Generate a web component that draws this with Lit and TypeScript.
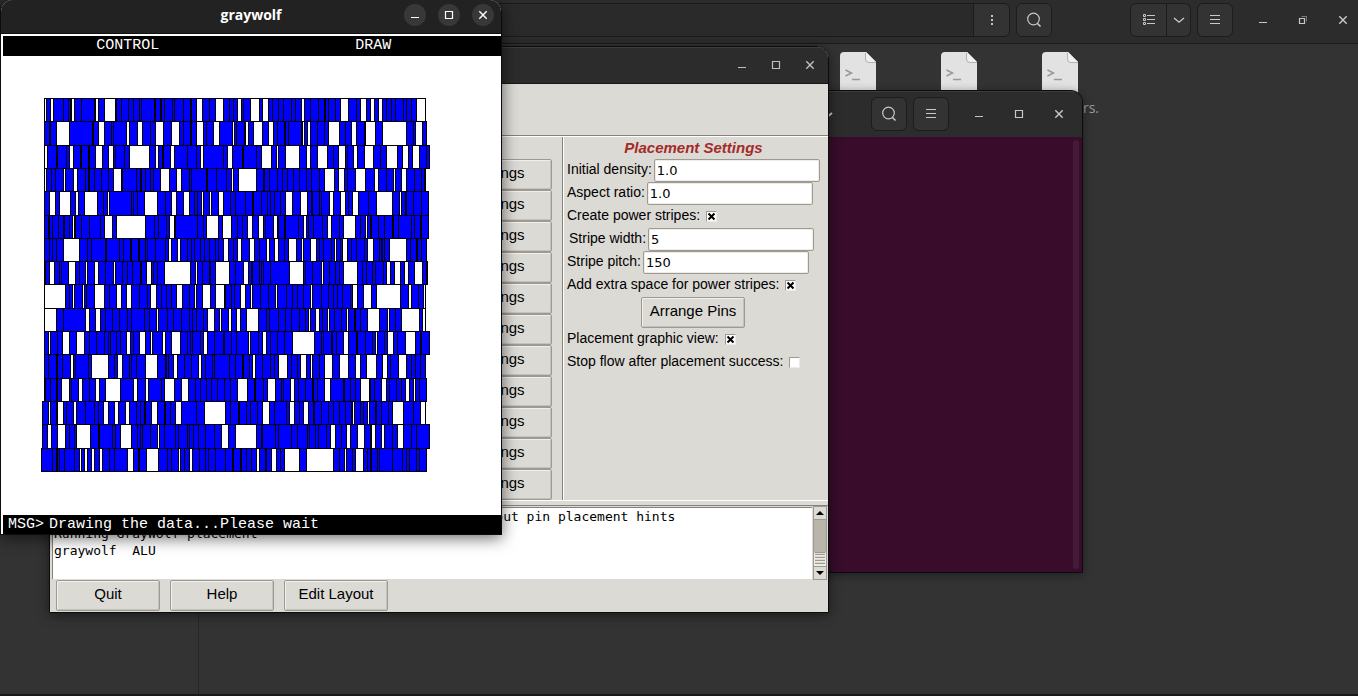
import { LitElement, html, css, svg } from "lit";
import { customElement } from "lit/decorators.js";

/* Cell rows of the placement: each number is the x of a cell's left edge,
   "w" marks an empty slot, and the last number closes the row. */
const ROWS: { y: number; cells: string }[] = [
  { y: 98, cells: "w14 16 w20 23 33 38 40 w41 44 51 64 w65 68 w74 85 86 91 98 103 109 111 124 125 130 131 134 142 144 153 160 161 w166 172 179 w185 193 199 203 w207 211 213 w220 229 w232 238 242 248 253 261 265 w271 274 280 288 294 295 298 305 w310 318 326 w330 336 w340 344 w348 352 356 361 365 373 376 381 w386 395" },
  { y: 121, cells: "14 19 20 w26 39 62 63 w68 74 81 83 w96 99 w107 112 120 w125 133 w141 149 153 160 161 w166 173 176 w183 189 w202 204 206 214 w215 218 w223 232 w238 243 247 254 255 258 271 w272 274 w277 280 287 294 w298 309 315 w321 326 334 w335 345 w352 376 383 w385 392 396" },
  { y: 145, cells: "w14 17 26 27 36 w39 43 50 51 58 59 w65 72 w78 83 85 94 w99 119 w125 128 132 133 w140 144 157 166 w170 173 193 w197 202 212 213 226 w231 241 w246 248 w255 269 w276 280 w287 297 303 w308 315 317 w323 327 w334 343 350 w356 367 w372 378 w382 389 396 399" },
  { y: 168, cells: "w14 16 21 25 w33 35 w43 47 55 58 59 64 71 78 w83 91 92 106 110 111 115 120 123 w130 139 w146 151 159 161 176 177 186 196 w201 203 w208 226 233 234 239 247 252 257 263 269 276 281 289 w294 304 w308 314 317 w325 335 w344 348 356 w363 365 w371 376 384 391 394 395" },
  { y: 191, cells: "14 w19 25 w29 40 w45 48 w54 67 73 w77 79 101 103 107 w114 127 135 w141 146 w153 159 164 167 w171 173 w179 181 w188 193 200 205 215 222 223 231 237 240 244 250 w255 262 w270 277 281 282 289 291 w299 303 w310 315 318 w322 328 338 w346 362 w369 371 375 376 383 391 398" },
  { y: 215, cells: "14 18 19 22 28 33 34 39 w42 44 45 51 59 70 w74 82 w86 115 124 128 136 w139 144 145 167 173 w176 188 w192 201 207 212 w217 222 w228 233 235 w243 247 248 254 255 268 w273 276 278 283 292 w297 301 309 w313 325 330 w335 337 340 341 348 354 362 363 368 381 384 390 391 398" },
  { y: 238, cells: "14 19 22 26 w33 49 57 61 75 76 89 93 100 101 108 109 115 117 125 135 w138 141 w147 150 157 161 164 170 174 179 185 188 w193 198 203 w207 211 w219 224 229 w236 239 w244 248 254 w258 266 w271 273 w280 286 289 293 301 w304 306 310 w312 317 321 326 334 w337 343 349 351 352 354 w359 376 380 386 387 391 396" },
  { y: 261, cells: "14 15 w19 24 29 31 w38 45 49 w55 57 w64 68 75 w83 85 92 97 102 110 111 w116 121 123 127 w134 160 w165 167 172 179 180 w185 199 205 w213 218 221 222 229 231 233 240 w259 273 275 282 w291 293 299 305 309 w313 327 332 336 342 345 353 w356 360 w364 370 w374 378 w384 392 396 397" },
  { y: 284, cells: "w14 35 39 w42 44 w52 54 56 w64 74 79 w86 91 w96 101 109 117 w120 126 131 136 141 w146 152 159 w164 166 w172 180 w185 194 195 201 204 w210 215 w220 222 230 238 w245 247 256 262 267 273 w280 282 291 298 303 307 312 320 w322 327 w333 341 w346 370 w378 381 388 w393 395" },
  { y: 308, cells: "w14 26 33 w55 59 w65 70 75 82 89 97 101 114 119 w126 128 137 143 151 159 162 166 173 w177 184 w189 191 w198 201 w206 210 w216 228 236 239 248 255 261 269 275 w278 280 w285 289 292 w297 299 304 311 w316 318 324 325 330 w337 349 w357 359 365 w371 389 w392 395" },
  { y: 331, cells: "14 w18 20 27 w32 39 w46 54 59 66 74 78 80 86 90 w96 100 103 w109 115 w120 122 w132 135 w141 150 157 160 162 170 w173 177 184 193 194 201 206 w218 220 228 w232 236 240 247 254 w262 284 291 293 301 302 306 w313 318 326 327 335 342 w345 347 354 w357 363 367 w375 385 390 391 399" },
  { y: 354, cells: "14 18 26 27 32 w40 43 45 58 w61 78 84 w87 92 99 101 106 w115 127 135 136 138 w143 147 154 161 w168 171 175 182 184 199 205 212 213 219 w222 225 232 240 244 w248 257 261 267 w270 276 w280 282 289 w294 302 w309 318 w325 330 w336 346 w352 357 360 w368 376 381 385 390 395" },
  { y: 378, cells: "14 15 20 26 27 w31 39 41 w48 52 59 w65 69 w75 90 w103 107 w115 118 131 w134 144 w151 158 165 170 176 181 187 194 200 w207 217 224 225 233 w237 245 251 253 w260 264 268 275 282 283 287 w294 300 313 314 320 325 w330 339 340 344 w351 356 359 366 371 w375 379 w383 385 389 396" },
  { y: 401, cells: "12 w18 20 26 w27 33 36 w43 46 55 64 68 w73 78 w84 88 w95 99 106 110 114 115 w121 127 134 135 140 w145 151 166 w174 195 200 208 209 216 220 227 w232 239 244 256 w259 264 269 w273 278 283 284 291 298 303 309 315 321 w322 324 330 333 w337 339 345 346 351 358 w362 373 383 w390 395" },
  { y: 424, cells: "12 w17 21 w27 35 39 44 w46 60 68 69 82 85 w90 101 107 110 112 120 w127 129 134 145 148 157 159 163 168 175 184 w191 198 w205 226 231 232 245 248 261 267 277 279 285 288 296 w300 305 311 w316 320 w327 334 340 w341 345 w351 354 362 w367 373 381 386 399" },
  { y: 448, cells: "11 22 26 27 29 34 44 w49 51 w54 57 w61 64 w69 72 79 84 w97 103 108 109 w116 128 137 141 w148 150 154 w159 162 169 175 178 185 195 202 203 210 211 216 221 w226 229 235 236 w241 246 250 w254 269 w276 303 309 w314 316 322 w325 333 337 340 341 347 349 362 372 376 379 386 389 396" },
];

const drawPlacement = () => {
  const top = 98;
  const blue: string[] = [];
  const lines: string[] = [];
  ROWS.forEach((row, i) => {
    const y = row.y - top;
    const next = (ROWS[i + 1]?.y ?? 471) - top;
    const cells = row.cells.split(" ").map((c) => ({ empty: c[0] === "w", x: Number(c.replace("w", "")) - 11 }));
    const last = cells[cells.length - 1].x;
    cells.forEach((c, k) => {
      lines.push(`M${c.x} ${y}h1v${next - y + 1}h-1z`);
      if (!c.empty && k < cells.length - 1) blue.push(`M${c.x} ${y}H${cells[k + 1].x}V${next}H${c.x}z`);
    });
    lines.push(`M${cells[0].x} ${y}H${last + 1}v1H${cells[0].x}z`, `M${cells[0].x} ${next}H${last + 1}v1H${cells[0].x}z`);
  });
  return svg`<path d=${blue.join("")} fill="#0000ff"/><path d=${lines.join("")} fill="#000"/>`;
};

const icon = (body: unknown, size = 16) =>
  html`<svg width=${size} height=${size} viewBox="0 0 ${size} ${size}" fill="none" stroke="currentColor" aria-hidden="true">${body}</svg>`;
const minimize = () => icon(svg`<path d="M4 10.5h8"/>`);
const maximize = () => icon(svg`<path d="M4.5 4.5h7v7h-7z" stroke-width="1.2"/>`);
const restore = () => icon(svg`<path d="M4.500 6.500h5v5h-5z" stroke-width="1.2"/><path d="M6.500 4.500h5v5" opacity=".5"/>`);
const close = () => icon(svg`<path d="M4.3 4.3l7.4 7.4M11.7 4.3l-7.4 7.4" stroke-width="1.4"/>`);
const search = () => icon(svg`<circle cx="7.5" cy="7" r="5.8" stroke-width="1.2"/><path d="M11.5 11.5l3 3" stroke-width="1.6"/>`);
const menu = () => icon(svg`<path d="M3 3.5h10M3 7.5h10M3 11.5h10"/>`);
const dots = () => icon(svg`<path d="M7 3h2v2H7zM7 7h2v2H7zM7 11h2v2H7z" fill="currentColor" stroke="none"/>`);
const list = () => icon(svg`<path d="M2.5 2.5h2v2h-2zM2.5 6.5h2v2h-2zM2.5 10.5h2v2h-2zM6 3.5h8M6 7.5h8M6 11.5h8"/>`);
const chevron = () => icon(svg`<path d="M3 6l5 4.2L13 6" stroke-width="1.4"/>`);
const smallChevron = () => icon(svg`<path d="M5 7l3 2.5L11 7" stroke-width="2"/>`);

const base = css`
  :host, *, *::before, *::after { box-sizing: border-box; }
  button, input { font: inherit; color: inherit; margin: 0; padding: 0; border: 0; background: none; }
  button { display: grid; place-items: center; }
  svg { display: block; }
  .win-btn { width: 22px; height: 22px; border-radius: 11px; }
`;

@customElement("file-manager")
export class FileManager extends LitElement {
  static styles = [base, css`
    :host { display: flex; flex-direction: column; height: 100%; background: #333; color: #c8c8c8; border-bottom: 2px solid #1a1a1a; }
    .header { display: flex; align-items: center; justify-content: flex-end; flex: none; height: 44px; padding: 0 4px 4px 0; background: #2c2c2c; border-bottom: 1px solid #1a1a1a; }
    .path { flex: 1; display: flex; justify-content: flex-end; height: 34px; border: 1px solid #1a1a1a; border-radius: 6px; margin-right: 6px; background: #2a2a2a; overflow: hidden; }
    .tool { width: 36px; height: 34px; background: #333; border: 1px solid #1c1c1c; border-radius: 6px; }
    .path .tool { height: 32px; border-width: 0 0 0 1px; border-radius: 0; }
    .gap { flex: 0 1 78px; }
    .view { display: flex; margin-right: 6px; }
    .view .tool:first-child { border-radius: 6px 0 0 6px; width: 37px; }
    .view .tool:last-child { border-radius: 0 6px 6px 0; border-left: 0; width: 24px; }
    .controls { display: flex; gap: 18px; margin-left: 19px; }
    .body { flex: 1; display: grid; grid-template-columns: 199px 1fr; }
    .side { border-right: 1px solid #262626; }
    .files { display: flex; gap: 65px; padding: 8px 0 0 641px; align-items: flex-start; }
    .file { width: 36px; display: flex; flex-direction: column; align-items: flex-end; }
    .caption { margin-right: -21px; font: 14px/20px "Open Sans", "Noto Sans", sans-serif; color: #999; }
  `];
  render() {
    const files = ["", "", "rs."];
    return html`
      <header class="header">
        <div class="path"><button class="tool" aria-label="Path menu">${dots()}</button></div>
        <button class="tool" aria-label="Search">${search()}</button>
        <span class="gap"></span>
        <div class="view">
          <button class="tool" aria-label="List view">${list()}</button>
          <button class="tool" aria-label="View options">${chevron()}</button>
        </div>
        <button class="tool" aria-label="Menu">${menu()}</button>
        <div class="controls">
          <button class="win-btn" aria-label="Minimize">${minimize()}</button>
          <button class="win-btn" aria-label="Restore">${restore()}</button>
          <button class="win-btn" aria-label="Close">${close()}</button>
        </div>
      </header>
      <div class="body">
        <aside class="side"></aside>
        <main class="files">
          ${files.map((name) => html`
            <div class="file">
              <svg width="36" height="46" viewBox="0 0 36 46" aria-hidden="true">
                <path d="M4 0h22l10 10v32q0 4-4 4H4q-4 0-4-4V4q0-4 4-4z" fill="#e2e2e2"/>
                <path d="M26 0l10 10h-7q-3 0-3-3z" fill="#f0f0f0"/>
                <path d="M25.5 1v6q0 3.5 3.5 3.5h7" fill="none" stroke="#b4b0ac"/>
                <path d="M5.5 18l6 3-6 3M12 27.5h8" fill="none" stroke="#999" stroke-width="1.5"/>
              </svg>
              <span class="caption">${name}</span>
            </div>`)}
        </main>
      </div>`;
  }
}

@customElement("terminal-window")
export class TerminalWindow extends LitElement {
  static styles = [base, css`
    :host { display: flex; flex-direction: column; border: 1px solid #0c0c0c; border-radius: 12px 12px 0 0; overflow: hidden; background: #380c2a; color: #c8c8c8; box-shadow: 0 2px 10px rgba(0, 0, 0, .4); }
    .header { display: flex; align-items: center; justify-content: flex-end; gap: 6px; height: 46px; padding: 0 12px 2px 0; background: #2c2c2c; border-top: 1px solid #3c3c3c; }
    .tool { width: 36px; height: 34px; background: #333; border: 1px solid #1c1c1c; border-radius: 6px; }
    .drop { width: 16px; margin-right: 28px; }
    .controls { display: flex; gap: 18px; margin-left: 13px; }
    .screen { flex: 1; display: flex; justify-content: flex-end; padding: 3px; }
    .thumb { width: 6px; border-radius: 3px; background: #451a38; }
  `];
  render() {
    return html`
      <header class="header">
        <button class="drop" aria-label="New tab options">${smallChevron()}</button>
        <button class="tool" aria-label="Search">${search()}</button>
        <button class="tool" aria-label="Menu">${menu()}</button>
        <div class="controls">
          <button class="win-btn" aria-label="Minimize">${minimize()}</button>
          <button class="win-btn" aria-label="Maximize">${maximize()}</button>
          <button class="win-btn" aria-label="Close">${close()}</button>
        </div>
      </header>
      <div class="screen"><div class="thumb"></div></div>`;
  }
}

@customElement("flow-window")
export class FlowWindow extends LitElement {
  static styles = [base, css`
    :host { display: flex; flex-direction: column; border: 1px solid #0c0c0c; border-radius: 12px 12px 0 0; overflow: hidden; background: #dcdad5; color: #000; font: 15px/20px "Liberation Sans", Arial, sans-serif; box-shadow: 0 2px 12px rgba(0, 0, 0, .5); }
    .title { display: flex; align-items: center; justify-content: flex-end; gap: 12px; height: 37px; padding: 0 7px 1px 0; background: #2c2c2c; color: #c0c0c0; border-top: 1px solid #3c3c3c; border-bottom: 1px solid #161616; }
    .banner { height: 52px; border-bottom: 1px solid #85827c; }
    .main { display: grid; grid-template-columns: 1fr 265px; height: 364px; border-top: 1px solid #fff; }
    .steps { display: flex; flex-direction: column; align-items: flex-end; padding: 22px 10px 0 0; border-right: 1px solid #85827c; }
    .btn { background: #dcdad5; border: 1px solid #9e9a91; border-radius: 2px; box-shadow: inset 1px 1px #f0efec, inset -1px -1px #c5c2bb; height: 31px; width: 104px; padding-bottom: 3px; }
    .steps .btn { width: 109px; }
    .settings { border-left: 1px solid #fff; padding-left: 3px; }
    .heading { margin: 0; height: 22px; line-height: 22px; font-size: 15px; font-style: italic; color: #a52a2a; text-align: center; padding-right: 8px; }
    .row { display: flex; align-items: flex-start; height: 23px; gap: 2px; white-space: nowrap; }
    .row label { font-size: 14px; }
    .row.inset { padding-left: 2px; }
    .row.tick { gap: 6px; }
    .row.action { height: 31px; justify-content: center; padding-right: 9px; }
    .field { width: 166px; height: 23px; padding-left: 2px; background: #fff; border: 1px solid #9e9a91; border-radius: 2px; font: 13px/20px "DejaVu Sans", sans-serif; box-shadow: inset 0 0 0 1px #eeece8; }
    .check { appearance: none; width: 11px; height: 11px; margin-top: 6px; background: #fff; border: 1px solid; border-color: #9e9a91 #eeebe7 #eeebe7 #9e9a91; }
    .check:checked { background: #fff url("data:image/svg+xml,%3Csvg xmlns='http://www.w3.org/2000/svg' viewBox='0 0 9 9'%3E%3Cpath d='M1.5 1.5l6 6M7.5 1.5l-6 6' stroke='%23000' stroke-width='2'/%3E%3C/svg%3E") center / 9px 9px no-repeat; }
    .sash { height: 6px; border-top: 1px solid #fff; border-bottom: 1px solid #85827c; }
    .console { display: flex; height: 74px; padding: 0 1px 0 2px; }
    .log { flex: 1; margin: 1px 0 1px; padding: 0 1px; overflow: hidden; background: #fff; border-top: 1px solid #85827c; border-left: 1px solid #85827c; font: 13px/17px "DejaVu Sans Mono", monospace; }
    .line { white-space: pre; }
    .line.tail { padding-left: 410px; }
    .scroll { display: flex; flex-direction: column; width: 14px; margin-left: 1px; background: #bab5ab; border: 1px solid #9e9a91; }
    .arrow { height: 13px; background: #dcdad5; border-bottom: 1px solid #9e9a91; }
    .arrow.down { border-bottom: 0; border-top: 1px solid #9e9a91; }
    .track { flex: 1; display: flex; flex-direction: column; justify-content: flex-end; }
    .grip { height: 14px; border: 1px solid #eeebe7; border-top-color: #9e9a91; background: repeating-linear-gradient(#dcdad5 0 1px, #9e9a91 1px 2px, #eeebe7 2px 3px); }
    .actions { display: flex; gap: 10px; padding: 0 6px 1px; }
  `];
  render() {
    return html`
      <header class="title">
        <button class="win-btn" aria-label="Minimize">${minimize()}</button>
        <button class="win-btn" aria-label="Maximize">${maximize()}</button>
        <button class="win-btn" aria-label="Close">${close()}</button>
      </header>
      <div class="banner"></div>
      <div class="main">
        <div class="steps">${Array.from({ length: 11 }, () => html`<button class="btn">Settings</button>`)}</div>
        <section class="settings">
          <h2 class="heading">Placement Settings</h2>
          <div class="row"><label for="density">Initial density:</label><input id="density" class="field" value="1.0"></div>
          <div class="row"><label for="ratio">Aspect ratio:</label><input id="ratio" class="field" value="1.0"></div>
          <div class="row tick"><label for="stripes">Create power stripes:</label><input id="stripes" class="check" type="checkbox" checked></div>
          <div class="row inset"><label for="width">Stripe width:</label><input id="width" class="field" value="5"></div>
          <div class="row"><label for="pitch">Stripe pitch:</label><input id="pitch" class="field" value="150"></div>
          <div class="row tick"><label for="extra">Add extra space for power stripes:</label><input id="extra" class="check" type="checkbox" checked></div>
          <div class="row action"><button class="btn">Arrange Pins</button></div>
          <div class="row tick"><label for="view">Placement graphic view:</label><input id="view" class="check" type="checkbox" checked></div>
          <div class="row tick"><label for="stop">Stop flow after placement success:</label><input id="stop" class="check" type="checkbox"></div>
        </section>
      </div>
      <div class="sash"></div>
      <div class="console">
        <div class="log">
          <div class="line tail">without pin placement hints</div>
          <div class="line">Running GrayWolf placement</div>
          <div class="line">graywolf  ALU</div>
        </div>
        <div class="scroll">
          <button class="arrow" aria-label="Scroll up"><svg width="8" height="4" viewBox="0 0 8 4"><path d="M0 4l4-4 4 4z"/></svg></button>
          <div class="track"><div class="grip"></div></div>
          <button class="arrow down" aria-label="Scroll down"><svg width="8" height="4" viewBox="0 0 8 4"><path d="M0 0l4 4 4-4z"/></svg></button>
        </div>
      </div>
      <footer class="actions">
        <button class="btn">Quit</button><button class="btn">Help</button><button class="btn">Edit Layout</button>
      </footer>`;
  }
}

@customElement("graywolf-window")
export class GraywolfWindow extends LitElement {
  static styles = [base, css`
    :host { display: flex; flex-direction: column; border: 1px solid #0c0c0c; border-top: 0; border-radius: 12px 12px 0 0; overflow: hidden; background: #fff; color: #fff; box-shadow: 0 3px 16px rgba(0, 0, 0, .6); }
    .title { display: grid; grid-template-columns: 1fr auto 1fr; align-items: center; height: 34px; padding: 0 7px 3px; background: #222; border-bottom: 1px solid #111; }
    .name { grid-column: 2; margin: 0; font: 700 14px/20px "Open Sans", "Noto Sans", sans-serif; }
    .controls { display: flex; justify-content: flex-end; gap: 12px; }
    .win-btn { background: #383838; }
    .bar { display: flex; align-items: center; margin-left: 2px; background: #000; font: 15px/20px "Liberation Mono", monospace; }
    .menus { display: grid; grid-template-columns: 1fr 1fr; height: 20px; margin-top: 2px; padding: 0 5px 0 2px; }
    .menus button { height: 20px; }
    .canvas { flex: 1; padding: 42px 40px; }
    .message { gap: 5px; height: 19px; padding-left: 5px; }
  `];
  render() {
    return html`
      <header class="title">
        <h1 class="name">graywolf</h1>
        <div class="controls">
          <button class="win-btn" aria-label="Minimize">${minimize()}</button>
          <button class="win-btn" aria-label="Maximize">${maximize()}</button>
          <button class="win-btn" aria-label="Close">${close()}</button>
        </div>
      </header>
      <nav class="bar menus"><button>CONTROL</button><button>DRAW</button></nav>
      <div class="canvas">
        <svg width="389" height="374" viewBox="0 0 389 374" shape-rendering="crispEdges" role="img" aria-label="Cell placement">${drawPlacement()}</svg>
      </div>
      <div class="bar message"><span>MSG&gt;</span><span>Drawing the data...Please wait</span></div>`;
  }
}

@customElement("app-root")
export class AppRoot extends LitElement {
  static styles = css`
    :host { display: block; position: relative; height: 100vh; overflow: hidden; background: #333; }
    .terminal { position: absolute; left: 400px; top: 90px; width: 683px; height: 483px; }
    .flow { position: absolute; left: 49px; top: 46px; width: 780px; }
    .graywolf { position: absolute; left: 0; top: 0; width: 502px; height: 535px; }
  `;
  render() {
    return html`
      <file-manager></file-manager>
      <terminal-window class="terminal"></terminal-window>
      <flow-window class="flow"></flow-window>
      <graywolf-window class="graywolf"></graywolf-window>`;
  }
}
